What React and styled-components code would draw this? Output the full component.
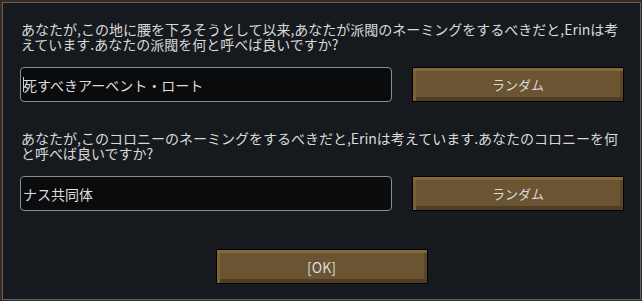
import React from 'react'
import styled, { createGlobalStyle } from 'styled-components'

const Global = createGlobalStyle`
  html, body {
    margin: 0;
    padding: 0;
    background: #3a2a1f;
  }
  body {
    font-family: "Noto Sans CJK JP", "Noto Sans", sans-serif;
  }
`;

const Window = styled.div`
  box-sizing: border-box;
  width: 639px;
  height: 298px;
  margin: 2px 0 0 2px;
  background: #16191e;
  border: 1px solid #5a6470;
  padding: 19px 15px 0 17px;
  display: flex;
  flex-direction: column;
`;

const Section = styled.div`
  display: flex;
  flex-direction: column;
  gap: ${p => p.gap}px;
  margin-top: ${p => p.top || 0}px;
`;

const Prompt = styled.p`
  margin: 0;
  padding-left: 1px;
  font-size: 14px;
  line-height: 15px;
  color: #d9d9d9;
`;

const Row = styled.div`
  display: flex;
  gap: 20px;
`;

const NameBox = styled.div`
  box-sizing: border-box;
  width: 372px;
  height: 35px;
  background: #0a0b0d;
  border: 1px solid #8a8c90;
  border-radius: 4px;
  display: flex;
  align-items: center;
  padding-left: 2px;
  font-size: 14px;
  color: #dcdcdc;
`;

const Caret = styled.span`
  width: 1px;
  height: 15px;
  background: #cfcfcf;
  margin-right: -1px;
`;

const Button = styled.div`
  box-sizing: border-box;
  width: 212px;
  height: 35px;
  border: 1px solid #000;
  background: #6b5431;
  box-shadow:
    inset 0 3px 0 #86683b,
    inset 3px 0 0 #7c6036,
    inset 0 -4px 0 #4e3c23,
    inset -3px 0 0 #5b4628;
  display: flex;
  align-items: center;
  justify-content: center;
  font-size: ${p => p.size || 13}px;
  color: #dcdcdc;
`;

const Footer = styled.div`
  margin-top: 38px;
  display: flex;
  justify-content: center;
  padding-right: 2px;
`;

export default function App() {
  return (
    <>
      <Global />
      <Window>
        <Section gap={15}>
          <Prompt>
            あなたが,この地に腰を下ろそうとして以来,あなたが派閥のネーミングをするべきだと,Erinは考えています.あなたの派閥を何と呼べば良いですか?
          </Prompt>
          <Row>
            <NameBox>
              <Caret />
              死すべきアーベント・ロート
            </NameBox>
            <Button>ランダム</Button>
          </Row>
        </Section>
        <Section gap={15} top={29}>
          <Prompt>
            あなたが,このコロニーのネーミングをするべきだと,Erinは考えています.あなたのコロニーを何と呼べば良いですか?
          </Prompt>
          <Row>
            <NameBox>ナス共同体</NameBox>
            <Button>ランダム</Button>
          </Row>
        </Section>
        <Footer>
          <Button size={14}>[OK]</Button>
        </Footer>
      </Window>
    </>
  )
}
